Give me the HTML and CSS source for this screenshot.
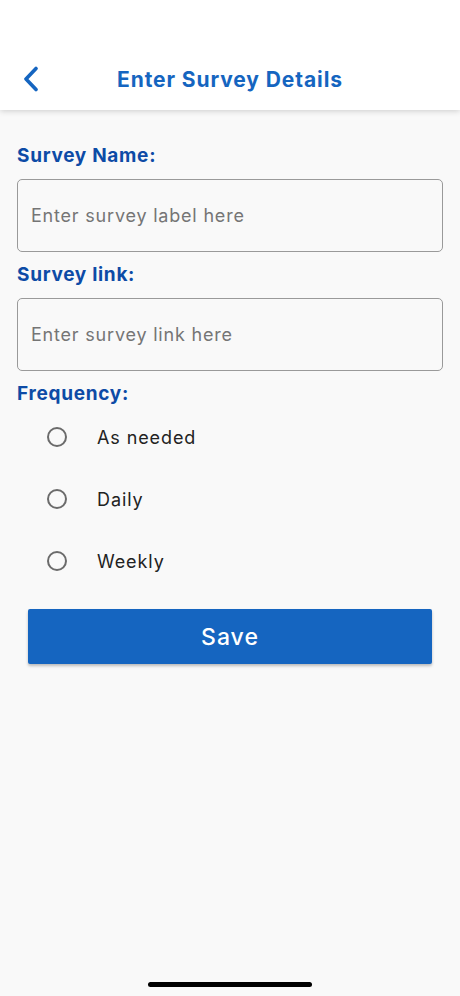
FILE: index.html
```html
<!DOCTYPE html>
<html>
<head>
<meta charset="utf-8">
<link rel="stylesheet" href="styles.css">
</head>
<body>
<div class="screen">
  <header class="topbar">
    <button class="back" aria-label="Back">
      <svg width="16" height="26" viewBox="0 0 16 26"><path d="M13 2.5 L3 13 L13 23.5" fill="none" stroke="#1565c0" stroke-width="3.6" stroke-linecap="round" stroke-linejoin="round"/></svg>
    </button>
    <h1 class="title">Enter Survey Details</h1>
  </header>
  <main class="form">
    <label class="label first">Survey Name:</label>
    <div class="field">Enter survey label here</div>
    <label class="label">Survey link:</label>
    <div class="field">Enter survey link here</div>
    <label class="label freq">Frequency:</label>
    <div class="radios">
      <div class="radio"><span class="circle"></span><span class="rtext">As needed</span></div>
      <div class="radio"><span class="circle"></span><span class="rtext">Daily</span></div>
      <div class="radio"><span class="circle"></span><span class="rtext">Weekly</span></div>
    </div>
    <button class="save">Save</button>
  </main>
  <div class="home-indicator"></div>
</div>
</body>
</html>
```
FILE: styles.css
```css
html, body {
  margin: 0;
  padding: 0;
}
body {
  font-family: Inter, "Noto Sans", sans-serif;
  background: #f9f9f9;
}
.screen {
  width: 460px;
  height: 996px;
  display: flex;
  flex-direction: column;
  position: relative;
  background: #f9f9f9;
}
.topbar {
  height: 110px;
  background: #fff;
  box-shadow: 0 1px 6px rgba(0,0,0,0.18);
  display: flex;
  align-items: flex-end;
  justify-content: center;
  position: relative;
  box-sizing: border-box;
  padding-bottom: 17px;
  z-index: 1;
}
.back {
  position: absolute;
  left: 23px;
  bottom: 18px;
  border: 0;
  background: none;
  padding: 0;
  width: 16px;
  height: 26px;
}
.back svg { display: block; }
.title {
  margin: 0;
  font-size: 21px;
  font-weight: 700;
  color: #1565c0;
  line-height: 26px;
  letter-spacing: 0.9px;
}
.form {
  display: flex;
  flex-direction: column;
  padding: 0 17px;
}
.label {
  font-size: 19px;
  font-weight: 700;
  color: #0d4ba6;
  line-height: 22px;
  letter-spacing: 0.7px;
  margin-top: 12px;
  margin-bottom: 12px;
  display: block;
}
.label.first {
  margin-top: 35px;
}
.label.freq {
  margin-bottom: 1px;
}
.field {
  height: 73px;
  box-sizing: border-box;
  border: 1px solid #9a9a9a;
  border-radius: 5px;
  background: #f9f9f9;
  display: flex;
  align-items: center;
  padding-left: 13px;
  font-size: 18px;
  letter-spacing: 0.8px;
  color: #757575;
}
.radios {
  display: flex;
  flex-direction: column;
}
.radio {
  height: 62px;
  display: flex;
  align-items: center;
  padding-left: 30px;
}
.circle {
  width: 20px;
  height: 20px;
  box-sizing: border-box;
  border: 2px solid #6b6b6b;
  border-radius: 50%;
}
.rtext {
  margin-left: 30px;
  font-size: 18px;
  color: #222;
  letter-spacing: 0.9px;
}
.save {
  margin: 17px 11px 0;
  height: 55px;
  border: 0;
  border-radius: 2px;
  background: #1565c0;
  color: #fff;
  font-family: Inter, "Noto Sans", sans-serif;
  font-size: 23px;
  font-weight: 500;
  letter-spacing: 1px;
  box-shadow: 0 2px 3px rgba(0,0,0,0.25);
}
.home-indicator {
  position: absolute;
  left: 148px;
  bottom: 9px;
  width: 164px;
  height: 5px;
  border-radius: 3px;
  background: #000;
}
```
